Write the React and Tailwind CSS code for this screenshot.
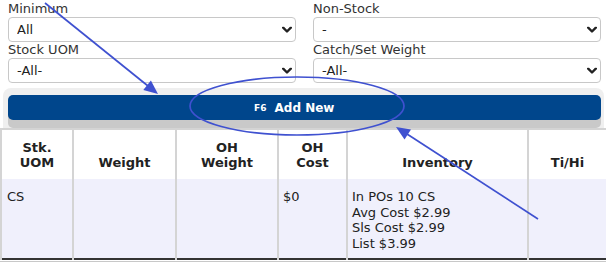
import React from "react";

const font = { fontFamily: '"DejaVu Sans", Verdana, sans-serif' };

function Chevron() {
  return (
    <svg width="10" height="7" viewBox="0 0 10 7" className="absolute right-[4px] top-1/2 -translate-y-1/2 pointer-events-none">
      <path d="M1.2 1.2 L5 5 L8.8 1.2" fill="none" stroke="#222" strokeWidth="2.4" strokeLinecap="round" strokeLinejoin="round" />
    </svg>
  );
}

function Field({ label, value }) {
  return (
    <div className="flex flex-col">
      <label className="text-[13px] leading-[16px] text-[#333] h-[16px]">{label}</label>
      <div className="relative h-[25px]">
        <select
          defaultValue={value}
          className="appearance-none w-full h-full border border-[#c8c8c8] rounded-[4px] bg-white pl-[8px] text-[13px] text-[#222] outline-none"
          style={font}
        >
          <option>{value}</option>
        </select>
        <Chevron />
      </div>
    </div>
  );
}

export default function App() {
  const headers = [
    ["Stk.", "UOM"],
    ["Weight"],
    ["OH", "Weight"],
    ["OH", "Cost"],
    ["Inventory"],
    ["Ti/Hi"],
  ];
  const widths = ["w-[72px]", "w-[103px]", "w-[102px]", "w-[69px]", "w-[181px]", "w-[79px]"];

  return (
    <div className="relative w-[606px] h-[267px] bg-white overflow-hidden" style={font}>
      <div className="grid grid-cols-2 gap-x-[17px] pl-[8px] pr-[5px] pt-[1px]">
        <Field label="Minimum" value="All" />
        <Field label="Non-Stock" value="-" />
        <Field label="Stock UOM" value="-All-" />
        <Field label="Catch/Set Weight" value="-All-" />
      </div>

      <div className="mt-[5px] ml-[3px] mr-[2px] bg-[#efefef] rounded-t-[8px] pt-[7px] pl-[5px] pr-[3px] h-[40px]">
        <button className="w-full h-[25px] bg-[#00468c] rounded-[5px] text-white font-bold text-[12px] flex items-center justify-center shadow-[0_8px_0_#c9c9c9]">
          <span className="relative">
            <span className="absolute right-full mr-[8px] top-[3px] text-[9px]">F6</span>
            Add New
          </span>
        </button>
      </div>

      <table className="w-full border-collapse table-fixed text-[13px] text-[#222]">
        <thead>
          <tr className="h-[50px] bg-white border-t-2 border-[#d4d4d4]">
            {headers.map((h, i) => (
              <th
                key={i}
                className={`${widths[i]} align-bottom pb-[9px] font-bold leading-[15px] border-x-2 border-[#d4d4d4]`}
              >
                {h.map((l) => (
                  <div key={l}>{l}</div>
                ))}
              </th>
            ))}
          </tr>
        </thead>
        <tbody>
          <tr className="h-[80px] bg-[#f0f0fc] border-b-2 border-[#333]">
            <td className="align-top pt-[10px] pl-[5px] border-x-2 border-[#d4d4d4] leading-[15.5px]">CS</td>
            <td className="border-x-2 border-[#d4d4d4]"></td>
            <td className="border-x-2 border-[#d4d4d4]"></td>
            <td className="align-top pt-[10px] pl-[4px] border-x-2 border-[#d4d4d4] leading-[15.5px]">$0</td>
            <td className="align-top pt-[10px] pl-[4px] border-x-2 border-[#d4d4d4] leading-[15.5px]">
              <div>In POs 10 CS</div>
              <div>Avg Cost $2.99</div>
              <div>Sls Cost $2.99</div>
              <div>List $3.99</div>
            </td>
            <td className="border-x-2 border-[#d4d4d4]"></td>
          </tr>
        </tbody>
      </table>
      <div className="h-px bg-[#c8c8c8] mt-[1px]"></div>

      <svg className="absolute inset-0 pointer-events-none" width="606" height="267">
        <g stroke="#3f51d0" strokeWidth="1.7" fill="none">
          <line x1="45" y1="3" x2="148" y2="86" />
          <ellipse cx="297" cy="106" rx="107" ry="29" />
          <line x1="538" y1="219" x2="407" y2="134" />
        </g>
        <g fill="#3f51d0">
          <polygon points="158,94 143.3,89.9 150.9,80.5" />
          <polygon points="396,127 411,129.6 404.5,139.6" />
        </g>
      </svg>
    </div>
  );
}
